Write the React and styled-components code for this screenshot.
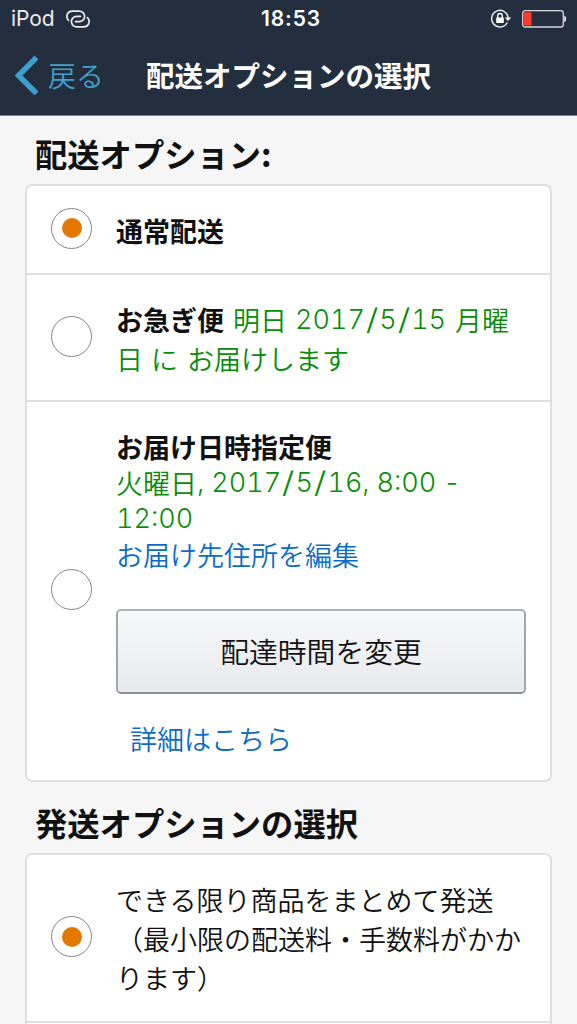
import React from 'react'
import styled, { createGlobalStyle } from 'styled-components'

const App = () => {
    return (
        <Screen>
            <GlobalStyle />
            <Header>
                <StatusBar>
                    <Carrier>
                        iPod
                        <LinkIcon />
                    </Carrier>
                    <Clock>18:53</Clock>
                    <StatusIcons>
                        <LockIcon />
                        <BatteryIcon />
                    </StatusIcons>
                </StatusBar>
                <NavBar>
                    <Back>
                        <svg width="24" height="40" viewBox="0 0 24 40">
                            <path d="M22.500 2.500 4.500 20.500l18 18" fill="none" stroke="#3fa1cb" strokeWidth="5.5" />
                        </svg>
                        戻る
                    </Back>
                    <NavTitle>配送オプションの選択</NavTitle>
                </NavBar>
            </Header>

            <Heading>配送オプション:</Heading>
            <Card>
                <Option $height={87}>
                    <Radio $checked />
                    <Body $top={1}>
                        <strong>通常配送</strong>
                    </Body>
                </Option>
                <Option $height={127}>
                    <Radio />
                    <Body $top={2}>
                        <Line>
                            <strong>お急ぎ便</strong>
                            <Green $indent={9}>明日</Green>
                            <Num $indent={8}>2017<Slash>/</Slash>5<Slash>/</Slash>15</Num>
                            <Green $indent={9}>月曜</Green>
                        </Line>
                        <Line>
                            <Green>日</Green>
                            <Green $indent={8}>に</Green>
                            <Green $indent={9}>お届けします</Green>
                        </Line>
                    </Body>
                </Option>
                <Option $height={380}>
                    <Radio />
                    <Body $top={3} $lineHeight={36}>
                        <Line><strong>お届け日時指定便</strong></Line>
                        <Line>
                            <Green>火曜日</Green>
                            <Num>,</Num>
                            <Num $indent={7}>2017<Slash>/</Slash>5<Slash>/</Slash>16,</Num>
                            <Num $indent={7}>8:00</Num>
                            <Num $indent={7}>-</Num>
                        </Line>
                        <Line><Num>12:00</Num></Line>
                        <Line><Link>お届け先住所を編集</Link></Line>
                        <Button>配達時間を変更</Button>
                        <MoreLink>詳細はこちら</MoreLink>
                    </Body>
                </Option>
            </Card>

            <Heading $second>発送オプションの選択</Heading>
            <Card>
                <Option $height={166}>
                    <Radio $checked />
                    <Body $top={0}>
                        <Line>できる限り商品をまとめて発送</Line>
                        <Line>（最小限の配送料・手数料がかか</Line>
                        <Line>ります）</Line>
                    </Body>
                </Option>
                <Option $height={120} />
            </Card>
        </Screen>
    )
}

//icons
const LinkIcon = () => (
    <svg width="24" height="18" viewBox="0 0 24 18" fill="none" stroke="#e9ebed" strokeWidth="1.7" strokeLinecap="round">
        <path d="M2.600 10.300A5.300 5.300 0 0 1 6 1.100h7.300a5.300 5.300 0 0 1 0 10.600H9.500" />
        <path d="M21.400 7.700a5.300 5.300 0 0 1-3.400 9.200h-7.300a5.300 5.300 0 0 1 0-10.600h3.800" />
    </svg>
)

const LockIcon = () => (
    <svg width="22" height="20" viewBox="0 0 22 20">
        <path d="M17.300 13.500A8.300 8.300 0 1 1 18.200 9" fill="none" stroke="#e4e6e8" strokeWidth="1.500" />
        <path d="M14.800 8.500h6.400L18 12z" fill="#fff" />
        <rect x="6.200" y="8.500" width="7.600" height="5.500" rx=".5" fill="#fff" />
        <path d="M7.700 9V6.800a2.300 2.300 0 0 1 4.600 0V9" fill="none" stroke="#fff" strokeWidth="1.300" />
    </svg>
)

const BatteryIcon = () => (
    <svg width="45" height="18" viewBox="0 0 45 18">
        <rect x=".7" y=".7" width="40.600" height="16.300" rx="2.500" fill="none" stroke="#d5d8da" strokeWidth="1.300" />
        <rect x="2" y="2.200" width="7.500" height="13.300" rx="1" fill="#ff3b2f" />
        <path d="M42.300 5.500c2.400.8 2.400 6 0 6.800z" fill="#fff" />
    </svg>
)

const GlobalStyle = createGlobalStyle`
    *{
        box-sizing:border-box;
    }
    body{
        margin:0;
        background:#f6f6f6;
        overflow:hidden;
    }
`

const Screen = styled.div`
    width:577px;
    height:1024px;
    overflow:hidden;
    background:#f6f6f6;
    color:#111;
    font-family:"Noto Sans CJK JP", sans-serif;
    font-weight:350;
    white-space:nowrap;
    strong{
        font-weight:700;
    }
`

const Header = styled.header`
    height:116px;
    background:#232f3e;
    border-bottom:1px solid #7b828b;
`

const StatusBar = styled.div`
    display:grid;
    grid-template-columns:1fr auto 1fr;
    align-items:center;
    height:37px;
    padding:0 10px 0 11px;
    color:#fff;
    font-family:Inter, sans-serif;
`

const Carrier = styled.div`
    display:flex;
    align-items:center;
    gap:12px;
    font-size:21px;
    font-weight:400;
    letter-spacing:-.1px;
    color:#eceeef;
`

const Clock = styled.div`
    padding-left:4px;
    font-size:21px;
    font-weight:600;
    letter-spacing:.9px;
`

const StatusIcons = styled.div`
    display:flex;
    align-items:center;
    justify-content:flex-end;
    gap:10px;
`

const NavBar = styled.div`
    display:flex;
    align-items:center;
    height:76px;
    padding-left:14px;
`

const Back = styled.div`
    display:flex;
    align-items:center;
    gap:10px;
    width:132px;
    font-size:28px;
    color:#3fa1cb;
`

const NavTitle = styled.div`
    padding-bottom:2px;
    font-size:28.5px;
    font-weight:700;
    color:#fff;
`

const Heading = styled.h2`
    height:${({ $second }) => ($second ? 71 : 68)}px;
    margin:0;
    padding:${({ $second }) => ($second ? 16 : 13)}px 0 0 35px;
    font-size:32.3px;
    line-height:48px;
    font-weight:700;
`

const Card = styled.section`
    width:527px;
    margin-left:25px;
    background:#fff;
    border:2px solid #dfdfdf;
    border-radius:7px;
`

const Option = styled.div`
    display:flex;
    align-items:center;
    height:${({ $height }) => $height}px;
    padding-left:24px;
    & + &{
        border-top:2px solid #dfdfdf;
    }
`

const Radio = styled.span`
    display:grid;
    place-items:center;
    flex:none;
    width:41px;
    height:41px;
    margin:0 24px 3px 0;
    border:1.5px solid #858585;
    border-radius:50%;
    &::after{
        content:"";
        width:20px;
        height:20px;
        border-radius:50%;
        background:${({ $checked }) => ($checked ? '#e47700' : 'transparent')};
    }
`

const Body = styled.div`
    padding-top:${({ $top }) => $top}px;
    font-size:27px;
    line-height:${({ $lineHeight }) => $lineHeight || 39}px;
`

const Line = styled.div`
    display:flex;
`

const Green = styled.span`
    margin-left:${({ $indent }) => $indent || 0}px;
    color:#098c09;
`

const Num = styled(Green)`
    font-family:Inter, sans-serif;
    font-weight:300;
    font-variant-numeric:tabular-nums;
`

const Slash = styled.span`
    display:inline-block;
    padding:0 2.5px;
    transform:scale(1.35, 1.08);
`

const Link = styled.span`
    color:#0a6cc4;
`

const Button = styled.button`
    display:block;
    width:410px;
    height:85px;
    margin:36px 0 0;
    padding:0;
    border:2px solid;
    border-color:#adb1b8 #a2a6ac #8d9096;
    border-radius:5px;
    background:linear-gradient(#f7f8fa, #e7e9ec);
    color:#111;
    font:inherit;
    font-size:28.8px;
`

const MoreLink = styled(Link)`
    display:block;
    margin:27px 0 0 14px;
`

export default App
